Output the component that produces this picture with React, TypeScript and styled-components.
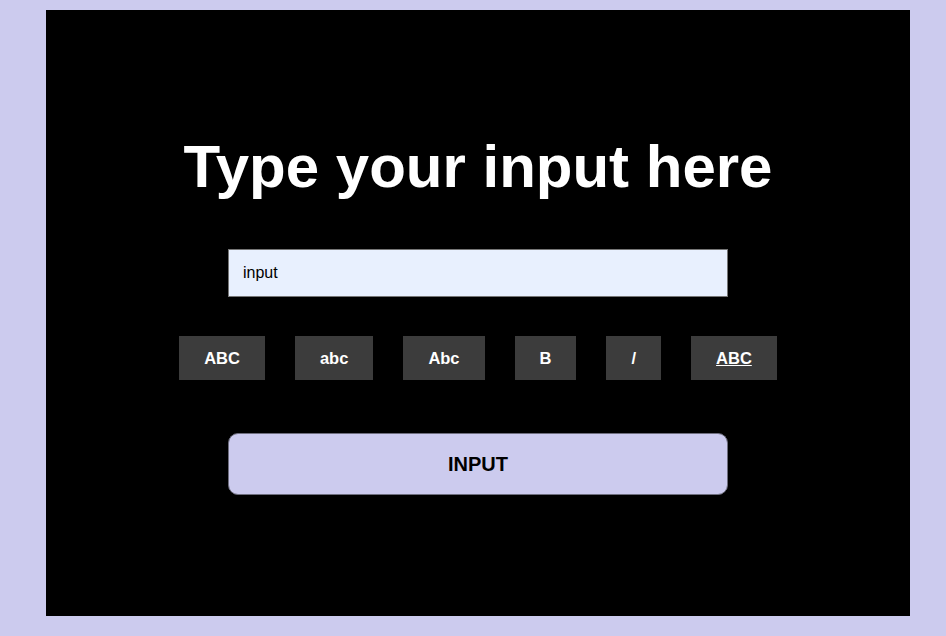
import React from "react";
import styled, { createGlobalStyle } from "styled-components";

const GlobalStyle = createGlobalStyle`
  html, body {
    margin: 0;
    padding: 0;
    overflow: hidden;
    background: #cccbee;
    font-family: "Liberation Sans", Arial, sans-serif;
  }
`;

const styles = [
  { label: "ABC" },
  { label: "abc" },
  { label: "Abc" },
  { label: "B" },
  { label: "/" },
  { label: "ABC", underline: true },
];

export default function App() {
  return (
    <>
      <GlobalStyle />
      <Page>
        <Panel>
          <Title>Type your input here</Title>
          <TextInput defaultValue="input" />
          <StyleRow>
            {styles.map((s, index) => (
              <StyleButton key={index} $underline={s.underline}>
                {s.label}
              </StyleButton>
            ))}
          </StyleRow>
          <SubmitButton>INPUT</SubmitButton>
        </Panel>
      </Page>
    </>
  );
}

const Page = styled.div`
  display: flex;
  padding: 10px 0 20px 46px;
  box-sizing: border-box;
`;

const Panel = styled.div`
  display: flex;
  flex-direction: column;
  align-items: center;
  width: 864px;
  height: 606px;
  box-sizing: border-box;
  padding-top: 122px;
  background: #000;
`;

const Title = styled.h1`
  margin: 0;
  color: #fff;
  font-family: "Liberation Sans", Arial, sans-serif;
  font-size: 60px;
  font-weight: 700;
  line-height: 69px;
`;

const TextInput = styled.input`
  width: 500px;
  height: 48px;
  margin-top: 48px;
  box-sizing: border-box;
  padding: 0 14px;
  border: 1px solid #767676;
  background: #e8f0fe;
  color: #000;
  font-family: "Liberation Sans", Arial, sans-serif;
  font-size: 16px;
  outline: none;
`;

const StyleRow = styled.div`
  display: flex;
  gap: 30px;
  margin-top: 39px;
`;

const StyleButton = styled.button<{ $underline?: boolean }>`
  height: 44px;
  padding: 0 25px;
  border: none;
  background: #3c3c3c;
  color: #fff;
  font-family: "Liberation Sans", Arial, sans-serif;
  font-size: 16.5px;
  font-weight: 700;
  text-decoration: ${(p) => (p.$underline ? "underline" : "none")};
  cursor: pointer;
`;

const SubmitButton = styled.button`
  width: 500px;
  height: 62px;
  margin-top: 53px;
  border: 1px solid #6e6e7e;
  border-radius: 10px;
  background: #cccbee;
  color: #000;
  font-family: "Liberation Sans", Arial, sans-serif;
  font-size: 20px;
  font-weight: 700;
  cursor: pointer;
`;
